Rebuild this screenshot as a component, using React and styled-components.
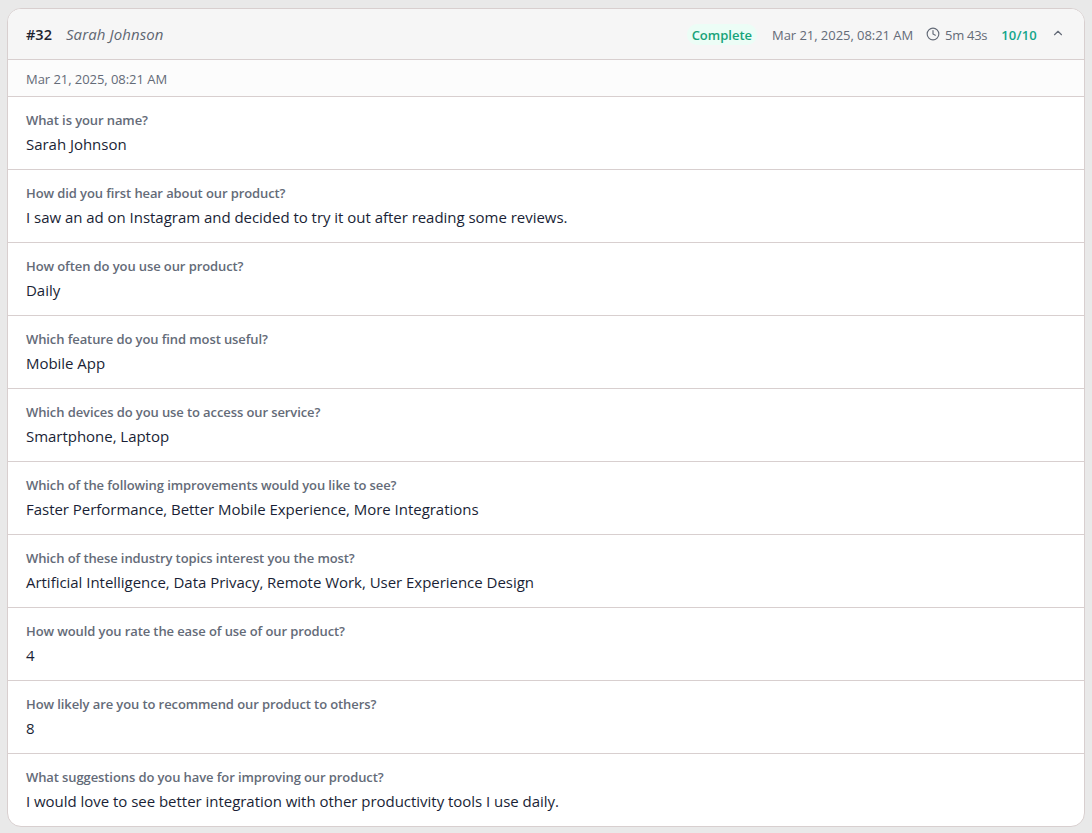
import React from "react";
import styled, { createGlobalStyle } from "styled-components";

const Global = createGlobalStyle`
  html, body { margin: 0; padding: 0; background: #e9e9e9; }
  body { font-family: "Open Sans", "Noto Sans", "Liberation Sans", sans-serif; }
  * { box-sizing: border-box; }
`;
const Page = styled.div`
  padding: 8px 7px 6px 7px;
  height: 833px;
  overflow: hidden;
`;
const Card = styled.section`
  background: #fff;
  border: 1px solid #d8cfcf;
  border-radius: 14px;
  overflow: hidden;
`;
const Header = styled.header`
  display: flex;
  align-items: center;
  justify-content: space-between;
  height: 51px;
  padding: 0 19px 0 18px;
  background: #f6f6f6;
  border-bottom: 1px solid #d8cfcf;
`;
const Identity = styled.div`
  display: flex;
  align-items: center;
  gap: 14px;
`;
const Status = styled.div`
  display: flex;
  align-items: center;
  gap: 14px;
  padding-top: 1px;
`;
const Id = styled.span`
  font-size: 14.5px;
  font-weight: 600;
  color: #1f2430;
`;
const Name = styled.span`
  font-size: 15px;
  letter-spacing: 0.1px;
  font-style: italic;
  color: #5f6672;
`;
const Badge = styled.span`
  font-size: 13px;
  font-weight: 600;
  line-height: 19px;
  color: #17a37a;
  background: #ecfdf6;
  border-radius: 10px;
  padding: 2px 5px 0;
  margin-right: 1px;
`;
const Meta = styled.span`
  font-size: 13px;
  letter-spacing: -0.05px;
  color: #646b78;
`;
const Duration = styled(Meta)`
  display: inline-flex;
  align-items: center;
  gap: 5px;
  margin-left: -1px;
  letter-spacing: -0.3px;
  & svg { margin-top: -2px; }
`;
const Score = styled.span`
  font-size: 13px;
  font-weight: 600;
  letter-spacing: 0.2px;
  color: #13a58a;
`;
const Toggle = styled.span`
  display: inline-flex;
  margin-top: -3px;
  color: #646b78;
`;
const SubRow = styled.div`
  height: 37px;
  display: flex;
  align-items: center;
  padding: 1px 18px 0;
  font-size: 13px;
  letter-spacing: -0.05px;
  color: #646b78;
  background: #fcfcfc;
  border-bottom: 1px solid #d8cfcf;
`;
const Row = styled.div`
  height: 73px;
  padding: 14px 18px 0;
  border-bottom: 1px solid #d8cfcf;
  &:last-child { border-bottom: 0; height: 72px; }
`;
const Question = styled.div`
  font-size: 13px;
  font-weight: 600;
  letter-spacing: -0.1px;
  line-height: 18px;
  color: #646b78;
`;
const Answer = styled.div`
  font-size: 15px;
  letter-spacing: -0.03px;
  line-height: 24px;
  margin-top: 3px;
  color: #1a1f36;
`;

const rows = [
  ["What is your name?", "Sarah Johnson"],
  ["How did you first hear about our product?", "I saw an ad on Instagram and decided to try it out after reading some reviews."],
  ["How often do you use our product?", "Daily"],
  ["Which feature do you find most useful?", "Mobile App"],
  ["Which devices do you use to access our service?", "Smartphone, Laptop"],
  ["Which of the following improvements would you like to see?", "Faster Performance, Better Mobile Experience, More Integrations"],
  ["Which of these industry topics interest you the most?", "Artificial Intelligence, Data Privacy, Remote Work, User Experience Design"],
  ["How would you rate the ease of use of our product?", "4"],
  ["How likely are you to recommend our product to others?", "8"],
  ["What suggestions do you have for improving our product?", "I would love to see better integration with other productivity tools I use daily."],
];

export default function App() {
  return (
    <Page>
      <Global />
      <Card>
        <Header>
          <Identity>
            <Id>#32</Id>
            <Name>Sarah Johnson</Name>
          </Identity>
          <Status>
            <Badge>Complete</Badge>
            <Meta>Mar 21, 2025, 08:21 AM</Meta>
            <Duration>
              <svg width="14" height="14" viewBox="0 0 24 24" fill="none" stroke="currentColor" strokeWidth="2" strokeLinecap="round" strokeLinejoin="round">
                <circle cx="12" cy="12" r="10" />
                <path d="M12 6v6l4 2" />
              </svg>
              5m 43s
            </Duration>
            <Score>10/10</Score>
            <Toggle>
              <svg width="14" height="14" viewBox="0 0 24 24" fill="none" stroke="currentColor" strokeWidth="2" strokeLinecap="round" strokeLinejoin="round">
                <path d="m18 15-6-6-6 6" />
              </svg>
            </Toggle>
          </Status>
        </Header>
        <SubRow>Mar 21, 2025, 08:21 AM</SubRow>
        {rows.map(([q, a]) => (
          <Row key={q}>
            <Question>{q}</Question>
            <Answer>{a}</Answer>
          </Row>
        ))}
      </Card>
    </Page>
  );
}
